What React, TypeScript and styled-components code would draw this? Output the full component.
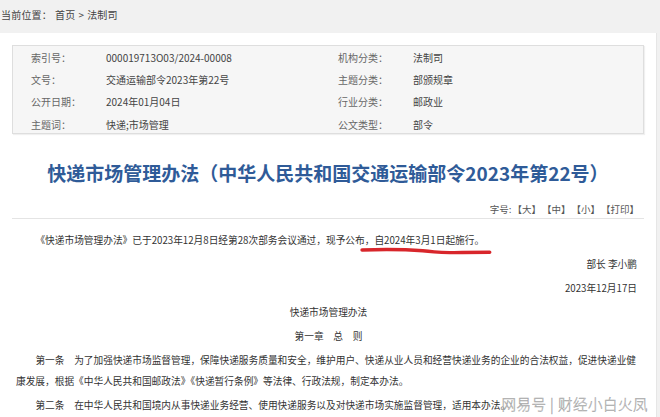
import React from "react";
import styled, { createGlobalStyle } from "styled-components";

const GlobalStyle = createGlobalStyle`
  html, body {
    margin: 0;
    padding: 0;
    background: #f1f1f1;
    font-family: "Noto Sans CJK SC", "Microsoft YaHei", sans-serif;
    color: #333;
  }
`;

const Page = styled.div`
  position: relative;
  width: 660px;
  height: 417px;
  overflow: hidden;
  background: #f1f1f1;
`;

const Breadcrumb = styled.div`
  height: 33px;
  line-height: 30px;
  padding-left: 1px;
  font-size: 10px;
  color: #444;
  letter-spacing: 0.2px;

  span {
    margin: 0 3px;
  }
`;

const Panel = styled.div`
  width: 657px;
  box-sizing: border-box;
  padding: 12px 12px 0;
  background: #fff;
  border-right: 1px solid #e6e6e6;
  min-height: 384px;
`;

const InfoBox = styled.div`
  display: grid;
  grid-template-columns: 75px 232px 75px 1fr;
  grid-auto-rows: 22.3px;
  align-items: center;
  padding: 0 0 0 18px;
  height: 89px;
  box-sizing: border-box;
  background: #f6f6f6;
  border: 1px solid #dedede;
  box-shadow: 1px 1px 1px rgba(0, 0, 0, 0.06);
  font-size: 10px;
`;

const Label = styled.div`
  color: #666;
`;

const Value = styled.div`
  color: #444;
`;

const Title = styled.h1`
  margin: 24px 0 0;
  text-align: center;
  font-size: 19px;
  line-height: 30px;
  font-weight: 700;
  color: #2f5b98;
  letter-spacing: 0;
`;

const Toolbar = styled.div`
  margin-top: 13px;
  display: flex;
  justify-content: flex-end;
  gap: 1px;
  padding: 0 5px 1px 0;
  line-height: 16px;
  font-size: 9.5px;
  color: #555;
  border-bottom: 1px solid #e4e4e4;
`;

const Article = styled.div`
  padding: 11px 4px 0;
  width: 633px;
  box-sizing: border-box;
  font-size: 9.7px;
  line-height: 21px;
  color: #333;
`;

const Para = styled.p<{ $align?: "left" | "center" | "right" }>`
  margin: 0 0 3px;
  text-align: ${({ $align }) => $align || "left"};
  text-indent: ${({ $align }) => ($align && $align !== "left" ? "0" : "2em")};
  padding-right: ${({ $align }) => ($align === "right" ? "4px" : "0")};
`;

const Marked = styled.span`
  position: relative;

  svg {
    position: absolute;
    left: -14px;
    top: 15px;
    width: calc(100% + 22px);
    height: 7px;
    overflow: visible;
  }
`;

const Watermark = styled.div`
  position: absolute;
  right: 12px;
  bottom: 3px;
  font-size: 14.5px;
  letter-spacing: 0.5px;
  color: rgba(255, 255, 255, 0.9);
  -webkit-text-stroke: 0.5px rgba(120, 120, 120, 0.7);
  font-family: "Noto Sans CJK SC", sans-serif;
  font-weight: 300;
`;

const info: [string, string, string, string][] = [
  ["索引号：", "000019713O03/2024-00008", "机构分类：", "法制司"],
  ["文号：", "交通运输部令2023年第22号", "主题分类：", "部颁规章"],
  ["公开日期：", "2024年01月04日", "行业分类：", "邮政业"],
  ["主题词：", "快递;市场管理", "公文类型：", "部令"],
];

export default function App() {
  return (
    <Page>
      <GlobalStyle />
      <Breadcrumb>
        当前位置：<span>首页</span>&gt;<span>法制司</span>
      </Breadcrumb>
      <Panel>
        <InfoBox>
          {info.map((row) => (
            <React.Fragment key={row[0]}>
              <Label>{row[0]}</Label>
              <Value>{row[1]}</Value>
              <Label>{row[2]}</Label>
              <Value>{row[3]}</Value>
            </React.Fragment>
          ))}
        </InfoBox>
        <Title>快递市场管理办法（中华人民共和国交通运输部令2023年第22号）</Title>
        <Toolbar>
          <span>字号:</span>
          <span>【大】</span>
          <span>【中】</span>
          <span>【小】</span>
          <span>【打印】</span>
        </Toolbar>
        <Article>
          <Para>
            《快递市场管理办法》已于2023年12月8日经第28次部务会议通过，现予公布，
            <Marked>
              自2024年3月1日起施行。
              <svg viewBox="0 0 126 7" preserveAspectRatio="none">
                <path
                  d="M2 2 C 25 1.2, 45 1.6, 60 2.8 S 75 5, 90 4.6 S 115 4.2, 124 4.2"
                  fill="none"
                  stroke="#d8262b"
                  strokeWidth="3.4"
                  strokeLinecap="round"
                />
              </svg>
            </Marked>
          </Para>
          <Para $align="right">部长 李小鹏</Para>
          <Para $align="right">2023年12月17日</Para>
          <Para $align="center">快递市场管理办法</Para>
          <Para $align="center">第一章　总　则</Para>
          <Para>
            第一条　为了加强快递市场监督管理，保障快递服务质量和安全，维护用户、快递从业人员和经营快递业务的企业的合法权益，促进快递业健康发展，根据《中华人民共和国邮政法》《快递暂行条例》等法律、行政法规，制定本办法。
          </Para>
          <Para>
            第二条　在中华人民共和国境内从事快递业务经营、使用快递服务以及对快递市场实施监督管理，适用本办法。
          </Para>
        </Article>
      </Panel>
      <Watermark>网易号 | 财经小白火凤</Watermark>
    </Page>
  );
}
